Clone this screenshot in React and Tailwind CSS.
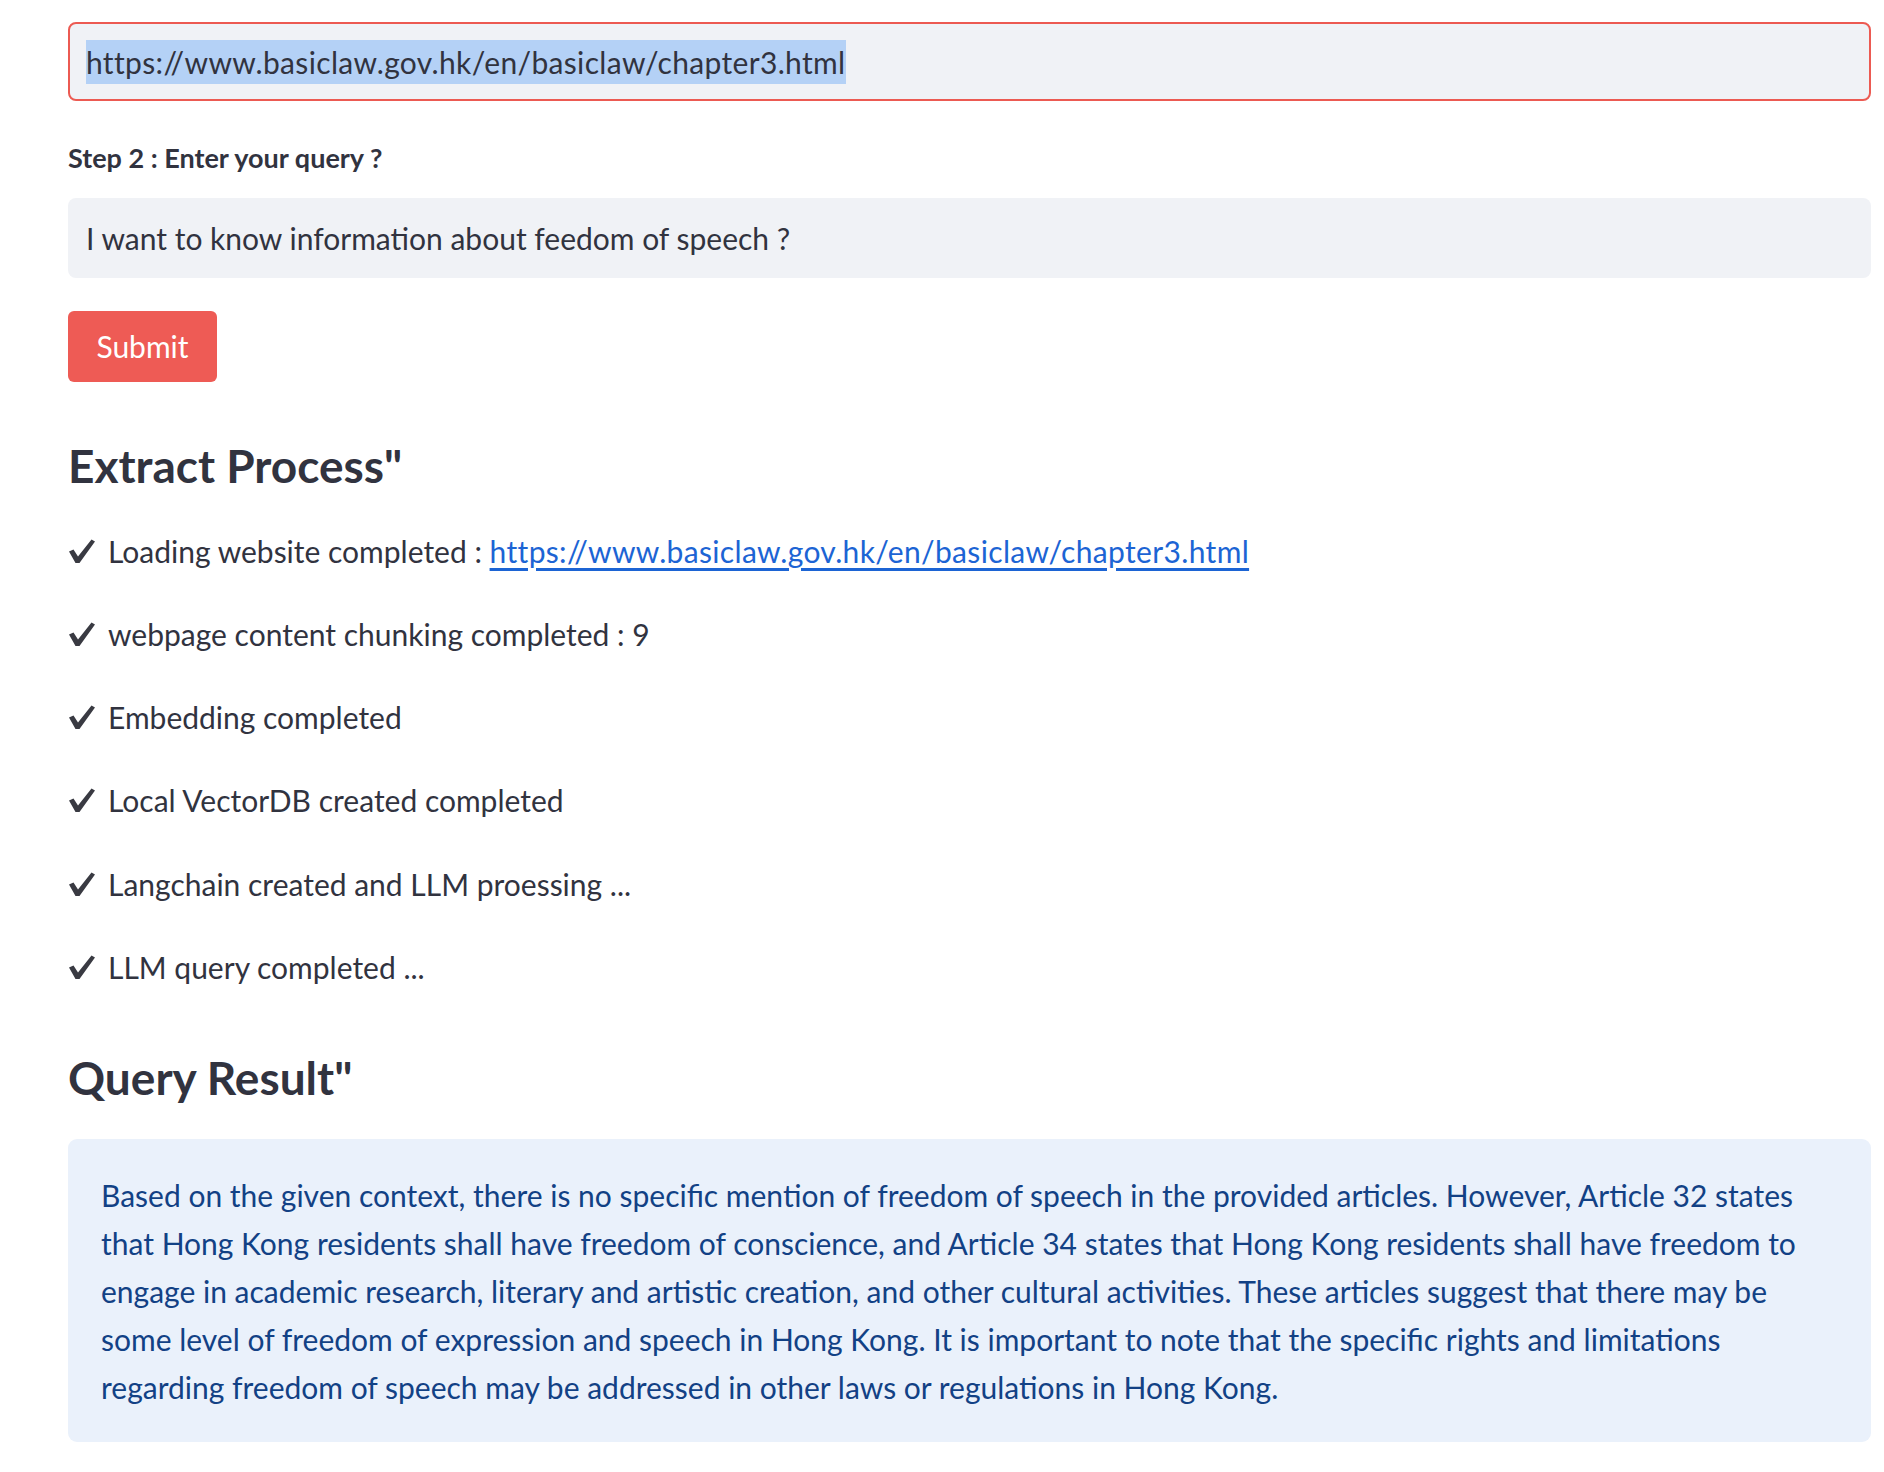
const steps = [
  { text: "Loading website completed : ", link: "https://www.basiclaw.gov.hk/en/basiclaw/chapter3.html" },
  { text: "webpage content chunking completed : 9" },
  { text: "Embedding completed" },
  { text: "Local VectorDB created completed" },
  { text: "Langchain created and LLM proessing ..." },
  { text: "LLM query completed ..." },
];

const answer = [
  "Based on the given context, there is no specific mention of freedom of speech in the provided articles. However, Article 32 states",
  "that Hong Kong residents shall have freedom of conscience, and Article 34 states that Hong Kong residents shall have freedom to",
  "engage in academic research, literary and artistic creation, and other cultural activities. These articles suggest that there may be",
  "some level of freedom of expression and speech in Hong Kong. It is important to note that the specific rights and limitations",
  "regarding freedom of speech may be addressed in other laws or regulations in Hong Kong.",
];

function Check() {
  return (
    <svg width="28" height="25" viewBox="0 0 27 25" className="shrink-0">
      <path d="M0.5 12.5 L5 10.5 L9.5 17.5 L23 0.5 L26.5 2.5 L11 24 L7 24 Z" fill="#393a42" />
    </svg>
  );
}

export default function App() {
  return (
    <div className="min-h-screen bg-white pl-[68px] pr-[13px] pt-[22px] text-[#31333f] font-['Lato','Liberation_Sans',sans-serif]">
      <div className="h-[79px] rounded-[8px] border-2 border-[#ec5a52] bg-[#f0f2f6] flex items-center pl-[16px]">
        <span className="bg-[#b4d1f6] text-[30px] leading-[44px] tracking-[0.34px] text-[#31333f]">
          https://www.basiclaw.gov.hk/en/basiclaw/chapter3.html
        </span>
      </div>

      <p className="mt-[41px] text-[27px] leading-[32px] font-bold">Step 2 : Enter your query ?</p>

      <div className="mt-[24px] h-[80px] rounded-[8px] bg-[#f0f2f6] flex items-center pl-[18px] text-[30px]">
        I want to know information about feedom of speech ?
      </div>

      <button className="mt-[33px] block w-[149px] h-[71px] rounded-[6px] bg-[#ee5b55] text-white text-[30px]">
        Submit
      </button>

      <h3 className="mt-[52px] text-[46px] leading-[64px] font-bold">Extract Process"</h3>

      <div className="mt-[29px] flex flex-col gap-[35.3px]">
        {steps.map((s, i) => (
          <div key={i} className="flex items-center h-[48px] text-[30px]">
            <Check />
            <span className="ml-[12px]">
              {s.text}
              {s.link && (
                <a href="#" className="text-[#1c64d4] underline underline-offset-[5px] tracking-[0.34px]">
                  {s.link}
                </a>
              )}
            </span>
          </div>
        ))}
      </div>

      <h3 className="mt-[55px] text-[46px] leading-[64px] font-bold">Query Result"</h3>

      <div className="mt-[29px] rounded-[9px] bg-[#eaf1fb] px-[33px] pt-[32px] pb-[31px] text-[#124185] text-[30px] leading-[48px]">
        {answer.map((line, i) => (
          <p key={i} className="whitespace-nowrap">{line}</p>
        ))}
      </div>
    </div>
  );
}
